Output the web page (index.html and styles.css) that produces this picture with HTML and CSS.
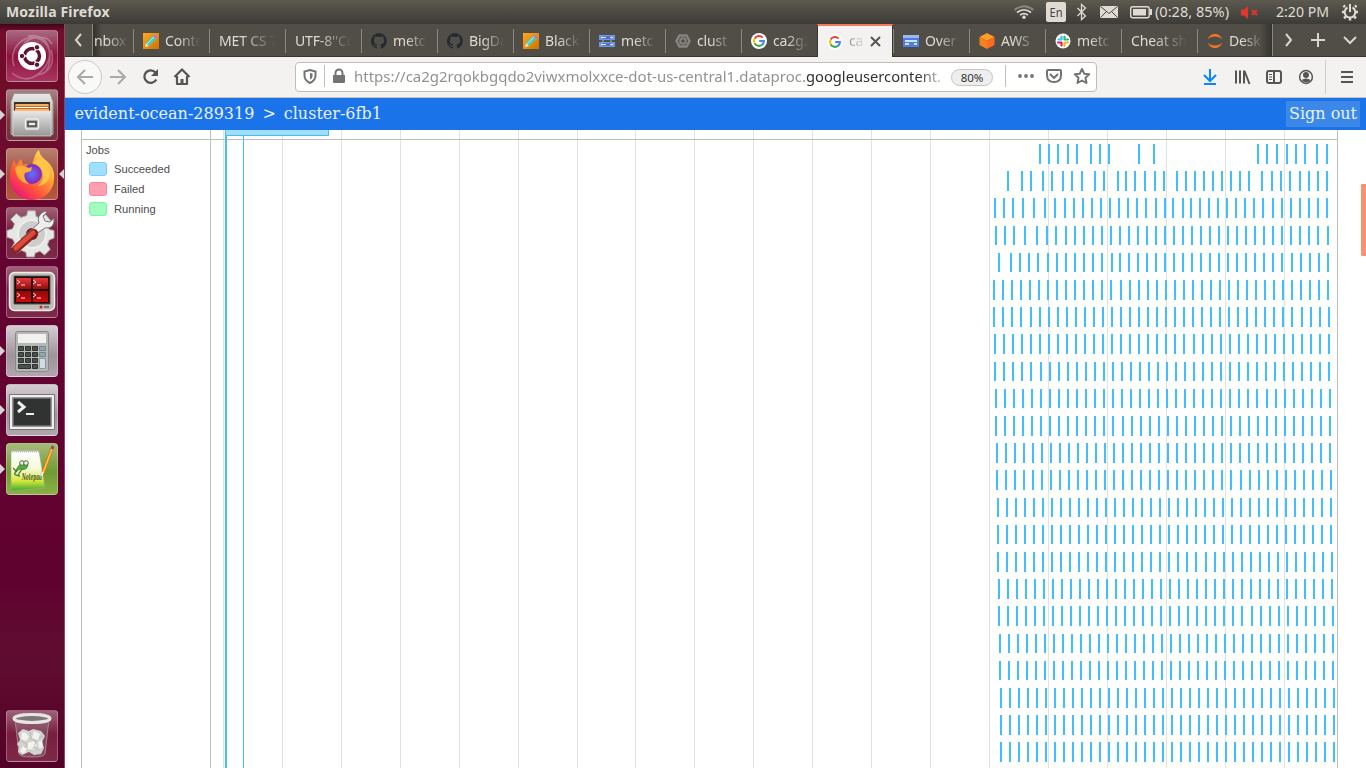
FILE: index.html
```html
<!DOCTYPE html>
<html lang="en">
<head>
<meta charset="utf-8">
<title>Mozilla Firefox</title>
<link rel="stylesheet" href="styles.css">
</head>
<body>
<svg class="defs" width="0" height="0">
  <defs>
    <linearGradient id="metal" x2="0" y2="1"><stop offset="0" stop-color="#e8e8e6"/><stop offset="1" stop-color="#969694"/></linearGradient>
    <linearGradient id="fire" x1="1" y1="0" x2=".2" y2="1"><stop offset="0" stop-color="#fff36b"/><stop offset=".4" stop-color="#ffa436"/><stop offset=".72" stop-color="#ff4e3e"/><stop offset="1" stop-color="#e80f82"/></linearGradient>
    <radialGradient id="globe"><stop offset="0" stop-color="#6173ff"/><stop offset="1" stop-color="#8527b5"/></radialGradient>
    <linearGradient id="leaf" x2="0" y2="1"><stop offset="0" stop-color="#fff"/><stop offset=".45" stop-color="#f4fad8"/><stop offset=".75" stop-color="#d5e83c"/><stop offset="1" stop-color="#38a82c"/></linearGradient>
    <linearGradient id="redscreen" x2="0" y2="1"><stop offset="0" stop-color="#e83a3a"/><stop offset=".5" stop-color="#8d0808"/><stop offset="1" stop-color="#c80d0d"/></linearGradient>
    <linearGradient id="orange" x2="1" y2="1"><stop offset="0" stop-color="#ffa726"/><stop offset="1" stop-color="#cf7400"/></linearGradient>
  </defs>
  <symbol id="pencil" viewBox="0 0 16 16"><path fill="url(#orange)" d="M0 0h16v16H0z"/><path fill="#f7e7c8" d="m2 14 1-4 3 3z"/><path fill="#3fd0c3" d="m3 10 7-7 3 3-7 7z"/><path fill="#b779d7" d="m10 3 1-1q2 0 3 2l-1 2z"/><path d="m4 11 7-7" stroke="#a4f3e6"/></symbol>
  <symbol id="github" viewBox="0 0 16 16"><path fill="#252b30" d="M8 0a8 8 0 0 0-2.500 15.600c.4.1.5-.2.5-.4v-1.500c-2.200.5-2.700-.9-2.700-.9-.4-.9-.9-1.200-.9-1.200-.7-.5.1-.5.1-.5.8.1 1.200.8 1.200.8.7 1.200 1.900.9 2.300.7.1-.5.3-.9.5-1.100-1.800-.2-3.600-.9-3.600-4 0-.9.3-1.600.8-2.100-.1-.2-.4-1 .1-2.100 0 0 .7-.2 2.200.8a7.500 7.500 0 0 1 4 0c1.500-1 2.200-.8 2.200-.8.4 1.100.2 1.900.1 2.100.5.6.8 1.300.8 2.100 0 3.100-1.900 3.700-3.700 3.900.3.300.6.8.6 1.500v2.200c0 .2.1.5.6.4A8 8 0 0 0 8 0z"/></symbol>
  <symbol id="server" viewBox="0 0 16 14"><path fill="#6f97e8" d="M0 1h16v5H0zm0 7h16v5H0z"/><path fill="#3f63b0" d="M4 2.500h8v2H4zm0 7h8v2H4z"/><path fill="#dfe8ff" d="M2 3h5v1H2zm9 0h3v1h-3zM2 10h5v1H2zm9 0h3v1h-3z"/><path stroke="#9bb8f1" d="M4 6v2M12 6v2"/></symbol>
  <symbol id="hex" viewBox="0 0 16 16"><path fill="none" stroke="#85847f" stroke-width="2.500" d="m4.500 2.500h7l3 5.500-3 5.500h-7l-3-5.500z"/><circle cx="8" cy="8" r="2.800" fill="none" stroke="#85847f" stroke-width="2"/></symbol>
  <symbol id="google" viewBox="0 0 16 16"><circle cx="8" cy="8" r="8" fill="#fff"/><g fill="none" stroke-width="2.100"><path stroke="#ea4335" d="M3.700 5.500a4.900 4.900 0 0 1 7.900-.9"/><path stroke="#fbbc05" d="M3.700 5.500a4.900 4.900 0 0 0 0 5"/><path stroke="#34a853" d="M3.700 10.500a4.900 4.900 0 0 0 7.300 1.300"/><path stroke="#4285f4" d="M8.200 8h4.700q0 2.400-1.900 3.800"/></g></symbol>
  <symbol id="card" viewBox="0 0 16 14"><path fill="#4d7fe0" d="M0 1h16v12H0z"/><path fill="#9bb8f1" d="M0 1h16v3H0z"/><path stroke="#fff" stroke-width="1.500" d="M2 7h12M2 10h4M11 10h3"/></symbol>
  <symbol id="aws" viewBox="0 0 16 16"><path fill="#ff9d28" d="m8 0 7.500 4L8 8 .5 4z"/><path fill="#f58220" d="m.5 4 7.500 4v8l-7.500-4z"/><path fill="#ff6a1f" d="m15.500 4-7.500 4v8l7.500-4z"/></symbol>
  <symbol id="slack" viewBox="0 0 16 16"><circle cx="8" cy="8" r="7.500" fill="#fff"/><g stroke-width="2.200" stroke-linecap="round"><path stroke="#36c5f0" d="M6.500 3.500v3M3.500 6.500h2"/><path stroke="#2eb67d" d="M9.500 3.500v3M11 6.500h2"/><path stroke="#ecb22e" d="M9.500 10v3M10 9.500h3"/><path stroke="#e01e5a" d="M6.500 10v2.500M3 9.500h3.500"/></g></symbol>
  <symbol id="jupyter" viewBox="0 0 16 16"><path fill="#f37726" d="M.8 6.500C2 2.500 5 1 8 1s6 1.500 7.200 5.500C13.500 4.200 11 3.500 8 3.500S2.500 4.200.8 6.500zM.8 9.500C2 13.500 5 15 8 15s6-1.500 7.200-5.500c-1.700 2.300-4.200 3-7.200 3s-5.500-.7-7.200-3z"/></symbol>
</svg>

<div class="desktop">
<header class="panel">
  <b class="panel-title">Mozilla Firefox</b>
  <svg class="tray" width="356" height="24" viewBox="1010 0 356 24">
    <g fill="none" stroke="#dfdbd2" stroke-width="1.700">
      <path stroke="#8b887f" d="M1014.500 10q9.500-7.500 19 0"/><path d="M1017 12.500q7-5.500 14 0M1020 15.200q4-3.200 8 0"/>
      <path stroke-width="1.300" d="m1077.500 8 8 8-4 3.500v-15l4 3.500-8 8"/>
    </g>
    <circle cx="1024" cy="17.300" r="1.700" fill="#dfdbd2"/>
    <rect x="1046" y="2" width="20" height="20" rx="2" fill="#dfdbd2"/>
    <text x="1049.500" y="17" class="tray-lang" textLength="13" lengthAdjust="spacingAndGlyphs">En</text>
    <path fill="#dfdbd2" d="M1100 6h18v12h-18z"/><path fill="none" stroke="#45443f" d="m1100.500 6.500 8.500 7 8.500-7M1100.500 17.500l6-6M1117.500 17.500l-6-6"/>
    <rect x="1130.700" y="6.700" width="18.500" height="11" rx="2" fill="none" stroke="#dfdbd2" stroke-width="1.400"/><path fill="#dfdbd2" d="M1133 9h13v6.500h-13zM1150 9h2v6h-2z"/>
    <text x="1155" y="17" class="tray-text" textLength="74" lengthAdjust="spacingAndGlyphs">(0:28, 85%)</text>
    <path fill="#e0372c" d="M1241 9.500h3l4-3.500v13l-4-3.500h-3z"/><path stroke="#e0372c" stroke-width="2" d="m1252 10 5 5m0-5-5 5"/>
    <text x="1276" y="17" class="tray-text" textLength="53" lengthAdjust="spacingAndGlyphs">2:20 PM</text>
    <g fill="none" stroke="#dfdbd2"><path stroke-width="2" d="M1347.500 7.500a5.300 5.300 0 1 0 5 0M1350 4v8"/><path stroke-width="2.500" d="m1345 7-1.500-1.500M1355 7l1.500-1.500M1344.500 12h-2.500M1355.500 12h2.500M1346 16.500l-2 1.800M1354 16.500l2 1.800M1350 18v2.500"/></g>
  </svg>
</header>

<div class="workspace">
<nav class="launcher">
  <div class="app dash"><svg viewBox="0 0 52 52"><g fill="none" stroke="#fff" stroke-opacity=".28" stroke-width="1.600"><path d="M8 36C2 18 18 4 31 8s17 19 9 33M22 6C40 2 50 22 39 37S16 51 6 43M46 14C40 3 25 7 18 13M31 45c14-2 18-14 14-25"/></g><circle cx="26" cy="26" r="14" fill="#fff"/><circle cx="26" cy="26" r="7.500" fill="none" stroke="#5f1233" stroke-width="3.400"/><path stroke="#fff" stroke-width="1.500" d="M26 26h-10M26 26l5-9M26 26l5 9"/><g fill="#5f1233" stroke="#fff"><circle cx="16" cy="26" r="2.700"/><circle cx="31" cy="17.300" r="2.700"/><circle cx="31" cy="34.700" r="2.700"/></g></svg></div>
  <div class="app files running"><svg viewBox="0 0 52 52"><path fill="url(#metal)" stroke="#999" d="M8 4.500h36l3 8v33H5v-33z"/><path fill="#333" d="M8 13h36v10H8z"/><path fill="#ce6b25" d="M9 15h34v8H9z"/><path stroke="#fff" d="M10 18.500h32"/><path stroke="#f8b15b" stroke-width="2" d="M10 16h32M9 21h34"/><path fill="url(#metal)" stroke="#ddd" stroke-width=".7" d="M7 22h38v25H7z"/><rect x="19.500" y="30" width="13" height="10" rx="2" fill="#aaa" stroke="#eee" stroke-width="1.500"/><path fill="#eee" stroke="#444" stroke-width="1.500" d="M22 33h8v4h-8z"/></svg></div>
  <div class="app firefox running focused"><svg viewBox="0 0 52 52"><path fill="url(#fire)" d="M33 2c1 6 4 8 9 12 5 5 7 11 6 18A22 21 0 0 1 4 30c-.5-8 2-12 4-18l2 5 5-6 2 6c5-2 7 0 9 1 2-6 2-12 7-16z"/><circle cx="26" cy="26" r="10" fill="url(#globe)"/><path fill="#ffad35" d="M9 20c4-4 10-2 14 0l3-1-1 4-6 2c-2 4 1 8 4 11-9-1-13-8-14-16z"/><path fill="#ffc549" d="M26 15c12 1 16 18 5 23 15-1 16-17 8-24l-5-4z"/></svg></div>
  <div class="app settings"><svg viewBox="0 0 52 52"><path fill="#e6e6e4" stroke="#aaa" d="m22 3 8 0 1 6 5 2 5-4 6 7-4 5 2 4 5 1v8l-5 2-2 5 3 5-6 6-5-4-5 2-1 4h-8l-1-5-5-2-5 3-5-6 3-5-2-4-6-2v-7l6-2 2-5-4-5 6-6 5 4 6-2z" transform="translate(1 1) scale(.94)"/><circle cx="26" cy="27" r="14" fill="#cdcdcb" stroke="#eee" stroke-width="2"/><circle cx="26" cy="27" r="6" fill="#711333"/><path fill="#eee" stroke="#777" d="m18 35-3-3 18-16q-3-8 6-12l2 1-4 4 2 5 5 1 4-4q1 11-9 10z"/><path fill="none" stroke="#8e211c" stroke-width="8" stroke-linecap="round" d="m10 42 18-16"/><path fill="none" stroke="#da4c3a" stroke-width="5" stroke-linecap="round" d="m10 41 17-15"/></svg></div>
  <div class="app terminator"><svg viewBox="0 0 52 52"><rect x="3.500" y="6.500" width="45" height="38" rx="5" fill="#bdbdb5" stroke="#eee" stroke-width="1.500"/><path fill="#240404" stroke="#555" d="M8 10h36v28H8z"/><path fill="url(#redscreen)" d="M10 12h15v11H10zm17 0h15v11H27zM10 25h15v11H10zm17 0h15v11H27z"/><path fill="none" stroke="#ffd7d7" d="m11 14 3 2-3 2m4 1h4m8-5 3 2-3 2m4 1h4M11 27l3 2-3 2m4 1h4m8-5 3 2-3 2m4 1h4"/><circle cx="35" cy="41" r="1.500" fill="#e21d1d"/><path stroke="#777" stroke-width="2" d="M38 41h5"/></svg></div>
  <div class="app calc running"><svg viewBox="0 0 52 52"><rect x="9.500" y="6.500" width="33" height="40" rx="2" fill="#b7b7b5" stroke="#888"/><path fill="#f1f1ef" d="M12 9h28v9H12z"/><g fill="#4b504d" stroke="#2e3331"><path d="M12.500 21.500h5v4h-5zm7 0h5v4h-5zm7 0h5v4h-5zM12.500 27.500h5v4h-5zm7 0h5v4h-5zm7 0h5v4h-5zM12.500 33.500h5v4h-5zm7 0h5v4h-5zm7 0h5v4h-5zM12.500 39.500h12v4h-12zm14 0h5v4h-5z"/></g><path fill="#91a5b0" stroke="#738591" d="M33.500 21.500h6v4h-6zm0 6h6v4h-6z"/><path fill="#d2dce1" stroke="#8999a3" d="M33.500 33.500h6v10h-6z"/></svg></div>
  <div class="app term running"><svg viewBox="0 0 52 52"><path fill="#eee" stroke="#777" d="M3.500 10.500h45v35h-45z"/><path fill="#303331" stroke="#777" stroke-width="1.500" d="M7 14h38v28H7z"/><path fill="none" stroke="#eee" stroke-width="3" d="m12 18 6 5-6 5"/><path stroke="#eee" stroke-width="2" d="M20 30h8"/></svg></div>
  <div class="app notepad running"><svg viewBox="0 0 52 52"><path fill="url(#leaf)" stroke="#a6aa92" stroke-width=".6" d="m5 8 28 0 6 37-34 3z"/><path stroke="#bbb" stroke-dasharray="1 1" stroke-width="3" d="M6 8h27"/><path fill="#55ad38" stroke="#315a27" stroke-width=".6" d="M15 20q6-3 7 2-1 6-8 4l-5 3q3-6 6-9z"/><circle cx="16" cy="20" r="2.300" fill="#eee" stroke="#4b703d"/><circle cx="20" cy="20" r="2.300" fill="#eee" stroke="#4b703d"/><path fill="none" stroke="#44772d" stroke-width="1.300" d="m10 28-3-3m9 1-4 6m-1-4q-6 4 3 5"/><text x="16" y="37" class="pad-label" textLength="20" lengthAdjust="spacingAndGlyphs">Notepad</text><path stroke="#d87a16" stroke-width="3.500" d="m46 6-9 24"/><path stroke="#ffc54e" stroke-width="1.500" d="m46 6-9 24"/><path stroke="#eee" stroke-width="2" d="m37 29-2 4"/><path stroke="#944b4d" stroke-width="3" d="m47 3-1 3"/></svg></div>
  <div class="app trash"><svg viewBox="0 0 52 52"><path fill="#9a8c91" fill-opacity=".35" stroke="#a9989f" stroke-width=".8" d="m9 9 4 35q1 3 13 3t13-3l4-35z"/><g fill="#d2d2cf"><path d="m12 23 5-4 6 2 4-2 8 2 4 5-3 6 2 6-3 6-7 1-5-3-7 3-4-3 1-5-2-3 3-4z"/><path fill="#f2f2ef" d="m16 22 4 1 3 4-3 4-5-2zm12-1 6 3-2 6-6-2zm-6 12 5-2 4 4-4 5-5-1zm10-1 4-2 1 7-4 2zm-15 4 4 3-3 5-4-3z"/><path fill="none" stroke="#aaa" stroke-width=".6" d="m15 31 6 3-2 4m5-16 1 7 5 2-2 7m5-10 4-2m-12 15 3-4 6 3"/></g><ellipse cx="26" cy="8.500" rx="18" ry="4" fill="#80767a" stroke="#e7e5e4" stroke-width="3"/></svg></div>
</nav>

<main class="browser">
<div class="tabs">
  <div class="scroll-left"><svg width="27" height="32"><path d="m16 10-5 6 5 6" fill="none" stroke="#d9d6ce" stroke-width="2"/></svg></div>
  <div class="tab clipped"><span>nbox</span></div>
  <div class="tab"><svg><use href="#pencil"/></svg><span>Conte</span></div>
  <div class="tab"><span>MET CS 7</span></div>
  <div class="tab"><span>UTF-8''Co</span></div>
  <div class="tab"><svg><use href="#github"/></svg><span>metc</span></div>
  <div class="tab"><svg><use href="#github"/></svg><span>BigDa</span></div>
  <div class="tab"><svg><use href="#pencil"/></svg><span>Black</span></div>
  <div class="tab"><svg><use href="#server"/></svg><span>metc</span></div>
  <div class="tab"><svg><use href="#hex"/></svg><span>clust</span></div>
  <div class="tab"><svg><use href="#google"/></svg><span>ca2g2</span></div>
  <div class="tab active"><svg><use href="#google"/></svg><span>ca</span><i><svg class="close"><path d="m2 2 9 9m0-9-9 9"/></svg></i></div>
  <div class="tab"><svg><use href="#card"/></svg><span>Over</span></div>
  <div class="tab"><svg><use href="#aws"/></svg><span>AWS</span></div>
  <div class="tab"><svg><use href="#slack"/></svg><span>metc</span></div>
  <div class="tab"><span>Cheat sh</span></div>
  <div class="tab last"><svg><use href="#jupyter"/></svg><span>Desk</span></div>
  <svg class="tab-actions" width="92" height="32"><path fill="none" stroke="#d9d6ce" stroke-width="2" d="m13 10 5 6-5 6M38 16h14M45 9v14M71 13l6 6 6-6"/></svg>
</div>
<div class="toolbar">
  <svg class="nav-icons" width="230" height="40" viewBox="65 57 230 40" fill="none" stroke="#555553" stroke-width="2">
    <circle cx="85" cy="77" r="16.500" fill="#f9f9f8" stroke="#ccc9c5" stroke-width="1"/><path stroke="#aaa9a6" d="M93 77H78m7-7-7 7 7 7M110 77h15m-7-7 7 7-7 7"/>
    <path stroke-width="2.300" d="M155.500 72.500a6.300 6.300 0 1 0 .8 7"/><path fill="#555553" stroke="none" d="M158 69v7h-7z"/>
    <path stroke-width="2.200" stroke-linejoin="round" d="m174.500 77 7.500-7.500 7.500 7.500M177 76v8h10v-8"/><path stroke-width="3" d="M182 79v5"/>
  </svg>
  <div class="address">
    <svg width="56" height="28" viewBox="296 64 56 28"><path fill="none" stroke="#737371" stroke-width="2" d="m310 71 5.500 1.500v4q0 5-5.500 7.500-5.500-2.500-5.500-7.500v-4z"/><path fill="#737371" d="m310 74 2.500.5v3q0 2-2.500 3z"/><path stroke="#c3c1be" d="M324.500 66v22"/><path fill="#737371" d="M333 76h12v7q0 1-1 1h-10q-1 0-1-1z"/><path fill="none" stroke="#737371" stroke-width="2" d="M335.500 77v-3a3.500 3.500 0 0 1 7 0v3"/></svg>
    <svg class="url" width="590" height="28"><text x="2" y="19" textLength="452" lengthAdjust="spacingAndGlyphs">https://ca2g2rqokbgqdo2viwxmolxxce-dot-us-central1.dataproc.</text><text x="454" y="19" class="host" textLength="135" lengthAdjust="spacingAndGlyphs">googleusercontent.</text></svg>
    <span class="zoom">80%</span>
    <svg width="90" height="28" viewBox="1001 64 90 28"><path stroke="#c3c1be" d="M1005.500 66v22"/><g fill="#737371"><circle cx="1020" cy="77" r="1.900"/><circle cx="1026" cy="77" r="1.900"/><circle cx="1032" cy="77" r="1.900"/></g><path fill="none" stroke="#737371" stroke-width="2" stroke-linejoin="round" d="M1048 71h12q1 0 1 1v4q0 7-7 7t-7-7v-4q0-1 1-1zM1050 75l4 4 4-4M1082 70l2.200 4.700 5 .6-3.700 3.500 1 5.200-4.500-2.500-4.500 2.500 1-5.200-3.700-3.500 5-.6z"/></svg>
  </div>
  <svg class="tools" width="166" height="40" viewBox="1200 57 166 40" fill="none" stroke="#555553" stroke-width="2"><path stroke="#0a84ff" d="M1210 69v12m-6-6 6 6 6-6M1204 84h12"/><path d="M1236 70.500v13M1240 70.500v13M1244 70.500v13M1244.500 71l5 13"/><rect x="1267" y="71" width="14" height="12" rx="2"/><path d="M1274 71v12"/><path stroke-width="1" d="M1269 74.500h3m-3 2.500h3m-3 2.500h3"/><circle cx="1306" cy="77" r="6.400" stroke-width="1.500"/><circle cx="1306" cy="75" r="3" fill="#555553" stroke="none"/><path fill="#555553" stroke="none" d="M1301.500 80q4.500-3 9 0-4 5-9 0z"/><path stroke="#d0ceca" stroke-width="1" d="M1325.500 60v34"/><path d="M1341 72h12m-12 5h12m-12 5h12"/></svg>
</div>
<div class="banner"><span class="crumb">evident-ocean-289319</span><span class="gt">&gt;</span><span class="crumb">cluster-6fb1</span><span class="signout">Sign out</span></div>
<section class="timeline">
  <div class="labels">
    <h4>Jobs</h4>
    <p><i class="ok"></i>Succeeded</p><p><i class="fail"></i>Failed</p><p><i class="run"></i>Running</p>
  </div>
  <svg class="chart" width="1155" height="638" viewBox="211 130 1155 638" shape-rendering="crispEdges">
    <g id="grid"></g>
    <path fill="#bebebe" d="M211 139h1126v1H211zM1337 130h1v638h-1z"/>
    <path fill="#a0dfff" d="M225 130h104v5H225z"/><path fill="#41befe" d="M225 130h1v6h-1zM328 130h1v6h-1zM226 135h103v1H226zM225 136h2v632h-2zM243 136h1v632h-1z"/>
    <g id="jobs"></g>
    <path fill="#f5946e" shape-rendering="auto" d="M1366 184h-4l-1 1v70l1 1h4z"/>
  </svg>
</section>
</main>
</div>
</div>
<script src="chart.js"></script>
</body>
</html>
```
FILE: styles.css
```css
* { box-sizing: border-box; }
body { margin: 0; font-family: "Noto Sans", "Open Sans", sans-serif; }
.defs { position: absolute; }
.desktop { width: 1366px; height: 768px; overflow: hidden; display: flex; flex-direction: column; background: #fff; }
.panel { height: 24px; flex: none; display: flex; align-items: center; justify-content: space-between; background: linear-gradient(#5c5a4e, #55534b 20%, #3c3b37); color: #dfdbd2; }
.panel-title { padding: 0 0 2px 6px; font-size: 14px; letter-spacing: .15px; }
.tray { display: block; }
.tray-text { fill: #dfdbd2; font-size: 14px; }
.tray-lang { fill: #45443f; font-size: 13px; }
.workspace { display: flex; flex: 1; min-height: 0; }
.launcher { width: 65px; height: 744px; padding: 6px 0 0 6px; display: flex; flex-direction: column; gap: 7px; background: linear-gradient(#3e041a, #720d2b 7px, #6d0c2b 110px, #640332 240px, #600230 560px, #5f0d30 630px, #540127); border-right: 1px solid #8b4966; }
.app { position: relative; width: 52px; height: 52px; flex: none; border-radius: 4px; border: 1px solid #ffffff42; background: linear-gradient(#ffffff55, #ffffff0c 45%, #ffffff18), #711335; }
.app > svg { width: 52px; height: 52px; display: block; margin: -1px; }
.app.dash { background: linear-gradient(#a86780, #8d1440 50%, #a83660); }
.app.files { background: linear-gradient(#a98382, #7e353c 60%, #743140); }
.app.firefox { background: linear-gradient(#b58072, #a54b38 55%, #b5573d); }
.app.calc, .app.term { background: linear-gradient(#d4cdd1, #9f929a 60%, #b2a7ae); }
.app.notepad { background: linear-gradient(#a4bb78, #709b32 55%, #89b145); }
.trash { margin-top: auto; margin-bottom: 6px; }
.running::before { content: ""; position: absolute; left: -7px; top: 20px; border: 5px solid transparent; border-left-color: #d8d3d3; border-right: 0; }
.focused::after { content: ""; position: absolute; left: 52px; top: 20px; border: 5px solid transparent; border-right-color: #d8d3d3; border-left: 0; }
.pad-label { font: italic bold 9px "DejaVu Serif", serif; fill: #4b592d; }
.browser { width: 1301px; display: flex; flex-direction: column; }
.tabs { height: 33px; flex: none; display: flex; background: #504e46; border-bottom: 1px solid #373530; }
.scroll-left { width: 28px; border-right: 1px solid #8b8982; }
.tab { position: relative; width: 76px; height: 32px; display: flex; align-items: center; padding: 2px 8px 0 10px; color: #dfdbd2; font-size: 14px; flex: none; }
.tab::before { content: ""; position: absolute; left: 0; top: 5px; height: 24px; width: 1px; background: #8b8982; }
.tab svg { width: 16px; height: 16px; margin-right: 6px; flex: none; }
.tab span { flex: 1; min-width: 0; padding-bottom: 2px; white-space: nowrap; mask-image: linear-gradient(to right, #000 38%, transparent 98%); letter-spacing: -.15px; }
.tab.clipped { width: 40px; padding: 2px 4px 0 1px; background: linear-gradient(90deg, #33312c, #504e46 9px); }
.tab.clipped::before, .tab.active::before { display: none; }
.tab.active { background: #f3f2f1; height: 33px; border-top: 2px solid #f17c57; border-left: 1px solid #373530; border-right: 1px solid #373530; color: #555; padding: 0 9px 0 8px; }
.tab.active > svg { margin-left: 1px; }
.tab.active span { mask-image: linear-gradient(to right, #0009, transparent); }
.tab.active i { width: 19px; height: 14px; margin-right: -3px; }
.tab.active .close { width: 14px; height: 14px; margin: 0 0 0 2px; display: block; stroke: #555; stroke-width: 2; }
.tab.last { background: linear-gradient(90deg, transparent 84%, #35332f); border-right: 1px solid #8b8982; }
.tab-actions { flex: none; }
.toolbar { height: 41px; flex: none; display: flex; background: #f4f2f1; border-bottom: 1px solid #c9c6c2; }
.nav-icons { flex: none; }
.address { width: 802px; height: 30px; margin-top: 5px; border: 1px solid #c0bdb9; border-radius: 4px; background: #fff; display: flex; align-items: center; flex: none; }
.address > svg { flex: none; }
.url { font-size: 15px; fill: #929290; mask-image: linear-gradient(to right, #000 96%, #0003); }
.url .host { fill: #303030; }
.zoom { width: 42px; height: 17px; flex: none; margin-left: 9px; margin-right: 8px; border: 1px solid #c6c4c2; border-radius: 9px; background: #eee; color: #333; font-size: 11.500px; line-height: 15px; text-align: center; }
.tools { margin-left: auto; }
.banner { height: 32px; flex: none; display: flex; align-items: center; padding: 0 6px 1px 9.500px; background: #1a73e8; color: #e8f1fd; font: 16px "DejaVu Serif", serif; }
.gt { margin: 0 8px; }
.signout { margin-left: auto; height: 26px; padding: 0 3px; line-height: 25px; background: #3b88e9; }
.timeline { display: flex; height: 638px; padding-left: 16px; }
.labels { width: 130px; flex: none; padding: 13px 0 0 4px; border-left: 1px solid #bebebe; border-right: 1px solid #bebebe; font: 11.200px/14px "Liberation Sans", Arial, sans-serif; color: #4d4d4d; background: linear-gradient(#bebebe, #bebebe) 0 9px / 100% 1px no-repeat; }
.labels h4 { margin: 0 0 2px; font-weight: 400; font-size: inherit; }
.labels p { margin: 0; height: 20px; display: flex; align-items: center; gap: 7px; padding-left: 3px; }
.labels i { width: 18px; height: 14px; border: 1.500px solid #78ceff; border-radius: 3px; background: #a0dfff; }
.labels .fail { border-color: #ff8298; background: #ffa0b1; }
.labels .run { border-color: #7bf59f; background: #a3fcbf; }
.chart { flex: none; display: block; }
.grid-line { fill: #e2e2e2; }
.job { fill: #41befe; }
```
FILE: chart.js
```js
const NS = "http://www.w3.org/2000/svg";
const grid = document.getElementById("grid");
const jobs = document.getElementById("jobs");

function rect(parent, x, y, width, height, name) {
  const r = document.createElementNS(NS, "rect");
  Object.entries({ x, y, width, height, class: name }).forEach(([k, v]) => r.setAttribute(k, v));
  parent.append(r);
}

const gridLines = [223,282,341,400,459,518,577,635,694,753,812,871,930,989,1048,1107,1166,1225,1284];
gridLines.forEach(x => rect(grid, x, 130, 1, 638, "grid-line"));

// Irregular rows list every start; the others run at an even pace between two ends.
const irregular = [
  [55,64,73,83,92,106,115,124,154,169,273,282,292,302,311,320,332,342],
  [23,37,46,58,67,78,87,97,110,119,133,141,150,160,170,179,192,201,210,219,228,237,246,255,264,277,287,296,305,315,324,333,342],
  [10,19,28,38,49,60,70,80,89,98,107,116,125,134,143,152,161,171,180,188,198,206,215,224,233,242,251,260,269,278,288,297,306,315,324,333,342],
  [11,20,29,40,52,62,71,81,90,99,108,117,126,135,144,153,162,171,180,189,198,207,216,225,234,243,252,261,270,279,288,297,306,315,324,333,343],
  [14,26,35,44,53,63,72,81,90,99,108,117,127,135,144,153,162,171,180,189,198,207,216,225,234,243,252,261,270,279,288,297,307,316,325,334,343]
];
const starts = [9.1,9.4,9.8,10.4,10.7,11.2,11.6,12,12.6,13,13.2,13.6,14.2,14.6,15,15.6,16,16.3];
const ends = [343.2,343.6,344,344.3,344.7,345,345.3,345.7,346,346.3,346.7,347,347.6,347.9,348.3,348.7,349,349.3];
const rows = irregular.concat(starts.map((a, k) => Array.from({ length: 38 }, (_, i) => Math.round(a + (ends[k] - a) * i / 37))));

rows.forEach((row, i) => {
  const top = Math.round(144 + i * 27.2);
  const height = i % 5 > 2 ? 19 : 20;
  row.forEach(x => rect(jobs, 984 + x, top, 2, height, "job"));
});
```
